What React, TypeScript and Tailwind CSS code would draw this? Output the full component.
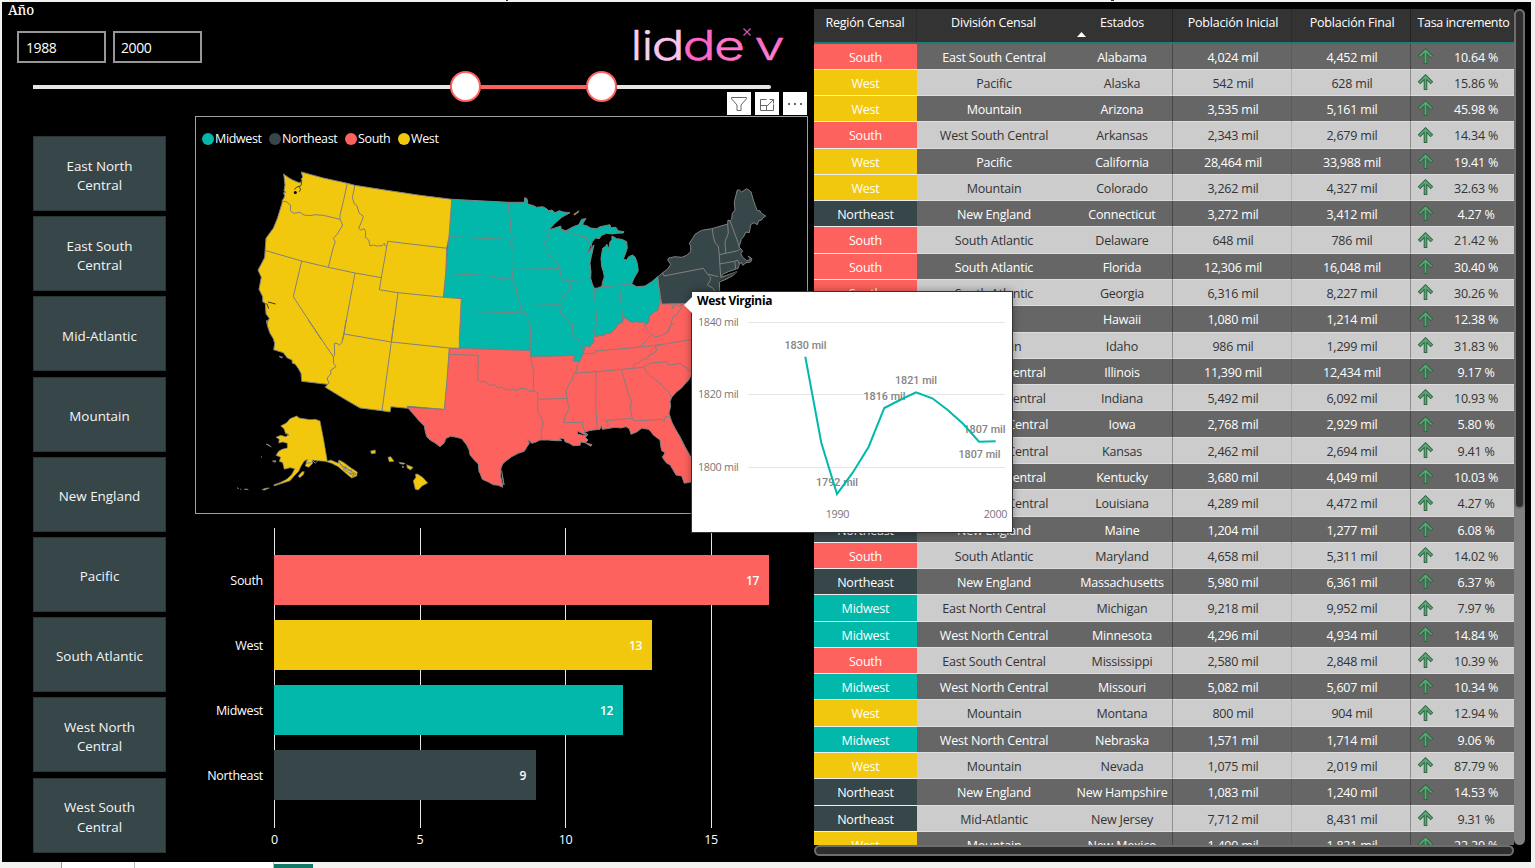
import React from "react";

type Region = "South" | "West" | "Midwest" | "Northeast";
type Row = [Region, string, string, string, string, string];

const REGION_BG: Record<Region, string> = {
  South: "bg-[#fd625e]",
  West: "bg-[#f2c80f]",
  Midwest: "bg-[#01b8aa]",
  Northeast: "bg-[#374649]",
};

const ROWS: Row[] = [
  ["South", "East South Central", "Alabama", "4,024", "4,452", "10.64"],
  ["West", "Pacific", "Alaska", "542", "628", "15.86"],
  ["West", "Mountain", "Arizona", "3,535", "5,161", "45.98"],
  ["South", "West South Central", "Arkansas", "2,343", "2,679", "14.34"],
  ["West", "Pacific", "California", "28,464", "33,988", "19.41"],
  ["West", "Mountain", "Colorado", "3,262", "4,327", "32.63"],
  ["Northeast", "New England", "Connecticut", "3,272", "3,412", "4.27"],
  ["South", "South Atlantic", "Delaware", "648", "786", "21.42"],
  ["South", "South Atlantic", "Florida", "12,306", "16,048", "30.40"],
  ["South", "South Atlantic", "Georgia", "6,316", "8,227", "30.26"],
  ["West", "Pacific", "Hawaii", "1,080", "1,214", "12.38"],
  ["West", "Mountain", "Idaho", "986", "1,299", "31.83"],
  ["Midwest", "East North Central", "Illinois", "11,390", "12,434", "9.17"],
  ["Midwest", "East North Central", "Indiana", "5,492", "6,092", "10.93"],
  ["Midwest", "West North Central", "Iowa", "2,768", "2,929", "5.80"],
  ["Midwest", "West North Central", "Kansas", "2,462", "2,694", "9.41"],
  ["South", "East South Central", "Kentucky", "3,680", "4,049", "10.03"],
  ["South", "West South Central", "Louisiana", "4,289", "4,472", "4.27"],
  ["Northeast", "New England", "Maine", "1,204", "1,277", "6.08"],
  ["South", "South Atlantic", "Maryland", "4,658", "5,311", "14.02"],
  ["Northeast", "New England", "Massachusetts", "5,980", "6,361", "6.37"],
  ["Midwest", "East North Central", "Michigan", "9,218", "9,952", "7.97"],
  ["Midwest", "West North Central", "Minnesota", "4,296", "4,934", "14.84"],
  ["South", "East South Central", "Mississippi", "2,580", "2,848", "10.39"],
  ["Midwest", "West North Central", "Missouri", "5,082", "5,607", "10.34"],
  ["West", "Mountain", "Montana", "800", "904", "12.94"],
  ["Midwest", "West North Central", "Nebraska", "1,571", "1,714", "9.06"],
  ["West", "Mountain", "Nevada", "1,075", "2,019", "87.79"],
  ["Northeast", "New England", "New Hampshire", "1,083", "1,240", "14.53"],
  ["Northeast", "Mid-Atlantic", "New Jersey", "7,712", "8,431", "9.31"],
  ["West", "Mountain", "New Mexico", "1,490", "1,821", "22.20"],
];

/* Rows average 26.27px; these take the extra pixel so that every rule stays crisp. */
const TALL_ROWS = new Set([3, 7, 10, 14, 17, 21, 25, 28]);

const DIVISIONS = [
  "East North Central",
  "East South Central",
  "Mid-Atlantic",
  "Mountain",
  "New England",
  "Pacific",
  "South Atlantic",
  "West North Central",
  "West South Central",
];

/* Map geometry: each sheet has its own origin and is digitised at three units per pixel. */
const sheet = (ox: number, oy: number) => (pts: string) =>
  pts
    .trim()
    .split(/\s+/)
    .map((p) => {
      const [x, y] = p.split(",").map(Number);
      return `${(ox + x / 3).toFixed(1)},${(oy + y / 3).toFixed(1)}`;
    })
    .join(" ");

const NW = sheet(240, 160);
const N = sheet(430, 180);
const NE = sheet(600, 170);
const SW = sheet(230, 320);
const S = sheet(430, 320);

const WEST = [
  NW("131,42 136,46 147,54 158,60 170,65 178,68 186,64 184,56 188,52 184,36 250,54 322,70 344,76 440,91 540,106 635,118 627,230 620,265 617,340 610,412 664,416 658,540"),
  SW("688,85 658,84 650,190 643,268 532,259 533,265 483,260 480,276 456,272 390,264 340,235 286,202 292,193 215,184 213,160 204,144 195,132 187,130 186,120 172,114 160,98 131,89 134,70 130,56 119,38 112,16 111,0"),
  NW("80,490 88,475 78,462 76,430 68,425 68,410 57,388 64,352 54,330 66,308 74,292 76,262 78,235 90,218 100,205 112,176 126,130 127,120 130,118 134,108 131,98 138,97 132,93 135,75"),
].join(" ");

const OHIO_RIVER =
  "690,355 688,375 682,392 672,396 665,402 658,410 656,425 650,432 640,425 630,428 620,424 606,428 598,422 585,413 578,415 578,427 566,430 560,440 550,452 540,460 528,460 518,468 508,464 500,470 490,466 492,486 482,494 480,500 465,498 460,520";

const MIDWEST = [
  N("65,58 235,67 283,67 284,53 291,56 294,73 308,76 320,82 338,80 350,86 356,92 366,90 375,98 388,92 400,96 420,98 395,112 375,130 357,149 375,144 392,138 394,148 408,152 430,140 446,134 455,118 468,116 460,128 458,134 472,138 482,144 500,146 510,140 540,134 542,143 558,142 564,152 582,155 580,159 562,160 545,162 530,160 515,166 508,176 496,174 488,184 480,200 472,222 482,208 492,195 484,230 480,250 483,275 482,295 487,312 493,325 505,324 515,320 518,305 523,290 520,275 515,260 513,235 518,205 528,198 530,192 536,206 540,185 546,180 546,168 560,176 575,178 590,185 592,205 586,222 580,238 590,240 596,230 608,225 616,232 622,250 625,272 612,295 605,312 620,320 645,318 665,305 683,290"),
  N(OHIO_RIVER),
  S("448,125 428,122 436,106 303,110 301,91 87,85"),
  N("94,358 40,352 47,280 56,170"),
].join(" ");

const SOUTH = [
  S("58,84 301,91 303,110 436,106 428,122 448,125 460,100"),
  N(OHIO_RIVER.split(" ").reverse().join(" ")),
  NE("185,402 240,394 290,386 380,370 400,420 430,470 370,520"),
  S("783,165 778,178 765,192 754,205 740,215 732,224 725,232 720,245 722,258 717,280 725,305 735,325 750,350 765,380 783,412 800,440 803,475 783,486 763,490 755,468 738,465 728,448 720,434 710,430 697,412 705,398 695,392 692,378 690,360 670,345 662,334 655,328 635,325 620,336 603,343 598,326 588,320 572,324 555,322 530,326 517,328 514,316 510,328 490,330 478,332 463,337 474,344 460,342 443,334 442,342 458,346 472,346 466,352 474,360 466,368 486,374 482,379 465,368 452,366 450,376 430,377 418,370 405,365 402,356 388,354 395,362 375,362 355,360 330,360 318,366 305,370 293,358 298,370 290,382 283,394 265,400 245,410 240,414 225,425 218,432 213,445 212,470 216,485 218,502 205,496 190,494 175,486 157,478 150,460 147,455 145,432 133,420 120,405 118,392 110,375 95,356 80,352 62,349 48,355 42,370 30,380"),
  SW("614,368 600,360 590,350 586,335 583,318 565,300 555,288 532,262 643,268"),
].join(" ");

const NORTHEAST = NE(
  "172,322 188,308 203,297 212,283 203,270 206,264 225,260 245,262 260,256 272,245 272,228 268,220 278,205 285,193 305,181 335,176 383,162 384,150 390,152 395,148 397,130 405,120 403,95 412,60 418,60 425,66 440,56 453,65 460,90 467,110 472,122 480,122 484,130 497,138 488,144 485,150 476,152 472,164 462,158 452,164 450,176 448,188 438,186 432,198 424,208 420,222 416,230 424,238 428,245 422,250 428,262 440,272 452,268 444,258 456,266 452,276 438,278 428,286 424,276 418,284 414,295 385,305 370,312 362,322 380,316 410,305 400,316 378,328 358,336 360,382 345,400 185,402"
);

const ALASKA = SW(
  "200,288 208,294 222,296 240,299 256,298 270,303 281,360 292,424 302,420 325,430 327,420 342,428 360,442 382,456 380,468 365,474 350,462 325,440 305,430 285,424 262,422 246,420 248,430 236,442 226,438 232,418 222,424 212,440 206,454 192,468 180,482 150,492 132,498 132,494 150,488 170,478 185,464 194,446 180,443 163,448 158,428 148,424 152,412 138,406 146,394 156,388 172,384 172,370 158,366 146,369 148,358 138,352 152,346 168,350 176,344 166,338 162,326 152,318 170,308 180,296"
);

const HAWAII = [
  "422,393 436,390 436,400 424,401",
  "474,412 482,410 492,424 478,425",
  "507,427 525,430 522,433 510,431",
  "530,434 549,442 542,450 532,444",
  "516,438 521,440 519,444",
  "556,463 562,462 575,470 580,474 593,489 576,498 565,510 556,508 550,482 558,472",
].map(SW);

const ISLES = [
  SW("108,372 116,374 124,381 118,378"),
  SW("205,468 216,455 223,455 220,464 209,473"),
  SW("127,423 138,422 136,427"),
  SW("93,410 96,411"),
  SW("21,503 26,506"),
  SW("31,507 34,509"),
  SW("43,508 55,509 50,507"),
  SW("96,509 106,505 118,504 104,510"),
  SW("147,109 158,111 154,114"),
  N("431,103 447,92 445,97 434,105"),
];

const BORDERS = [
  NW("126,124 140,125 144,130 152,136 151,152 162,160 180,157 192,165 210,167 225,164 250,166 300,178"),
  NW("322,70 310,125 300,165 300,178 308,195 292,222 280,235 286,245 280,262 265,322"),
  NW("78,272 185,303 265,322 345,339 425,353"),
  NW("344,76 341,96 337,112 343,132 350,136 358,160 370,168 366,182 356,205 362,210 373,206 377,215 376,232 386,240 390,258 400,255 410,258 426,257 433,250 436,258 440,260"),
  NW("622,265 443,244 418,389 474,398 612,412"),
  NW("185,303 160,410 245,540"),
  SW("235,0 310,110"),
  NW("345,339 308,540"),
  SW("348,0 342,42 335,68 328,76 322,70 313,70 314,105 310,110 311,130 318,140 303,150 302,162 293,172 292,180 298,186 288,200"),
  NW("474,398 455,540"),
  SW("492,0 484,66 456,272"),
  SW("342,42 484,66 658,84"),
  N("235,67 236,95 241,115 241,145 247,178 241,190 250,204 250,268 246,285 250,304 258,320 261,342 266,350 270,377 274,392 285,400 294,406 292,418 302,432 301,511"),
  N("56,170 247,179"),
  N("47,280 190,288 208,296 232,293 248,303"),
  N("250,268 390,266"),
  N("94,394 285,399"),
  N("270,377 385,374 388,380"),
  N("357,149 357,172 343,186 348,200 346,218 366,232 382,248 390,266 391,288 405,301 420,312 421,325 412,340 398,346 402,365 388,378 392,398 412,416 415,430 428,434 425,462 446,478 451,500 460,515"),
  N("405,301 483,298"),
  N("394,150 410,158 440,164 468,172 478,190 486,195 480,212"),
  N("493,325 498,400 502,430 493,450 492,468"),
  N("505,322 570,316 605,312"),
  N("568,318 578,415"),
  S("58,103 145,106 143,180 154,186 165,184 180,196 195,195 203,204 214,200 222,208 232,206 238,211 248,206 254,213 268,206 285,205 300,214 310,212 323,218 323,275 332,290 340,312 333,335 335,358"),
  S("303,110 306,135 311,155 310,214"),
  S("323,238 412,235"),
  S("448,125 440,138 441,150 430,165 426,182 417,192 408,212 411,235 414,250 418,265 405,290 400,308 457,307 458,320 465,335"),
  S("455,102 495,99 495,93 625,82 700,73 790,57"),
  S("436,159 500,155 640,142 660,130 710,125 717,136 750,130 790,158"),
  S("498,156 497,260 502,328"),
  S("575,150 590,205 604,245 601,265 607,295"),
  S("532,322 535,312 527,302 607,295 613,303 697,298 702,305 706,290 718,290"),
  S("643,142 648,155 672,176 690,190 705,206 718,218 725,235"),
  S("610,142 614,130 625,130 640,116 650,118 658,104 672,100 680,90 675,80 690,74"),
  S("625,82 642,70 650,58 665,43 650,30 643,10"),
  N("665,463 676,471 695,466 712,458 720,438 732,430"),
  NE("205,485 212,466 218,440 228,436 240,420 248,402 236,410 226,402 218,416 215,400"),
  S("215,452 222,495 217,468"),
  S("750,352 760,375"),
  NE("188,308 192,318 310,295 322,312 355,320"),
  NE("325,315 332,322 330,332 322,345 340,355 345,365"),
  NE("337,176 340,200 346,220 355,228 358,255 360,290 362,320"),
  NE("383,162 385,190 375,215 377,250"),
  NE("390,152 415,220 418,230"),
  NE("358,254 377,250 410,243 422,236"),
  NE("358,282 404,274 413,270 418,282"),
  NE("404,274 407,297"),
  SW("325,422 335,440 350,448 345,438 356,452 365,450 360,462 372,460 368,470"),
  SW("330,430 346,444 340,448 356,458 370,468 378,462 352,446"),
  SW("165,340 176,344 168,350"),
  SW("246,420 256,430 262,424"),
  SW("232,420 228,430 244,428"),
];

const INLETS = [
  NW("184,62 184,74 178,82 182,88 178,95"),
  NW("178,78 170,82 163,88"),
  NW("107,432 84,426"),
  NW("80,430 86,446"),
  NE("358,334 385,318 408,307"),
];

const UsMap = () => (
  <svg className="block h-full w-full" viewBox="196 117 611 396">
    <g stroke="#808080" strokeWidth="1" strokeLinejoin="round">
      <polygon points={SOUTH} fill="#fd625e" />
      <polygon points={NORTHEAST} fill="#374649" />
      <polygon points={MIDWEST} fill="#01b8aa" />
      <polygon points={WEST} fill="#f2c80f" />
      <g fill="#f2c80f" strokeWidth="0.7">
        <polygon points={ALASKA} />
        {HAWAII.map((p) => (
          <polygon key={p} points={p} />
        ))}
        {ISLES.map((p) => (
          <polygon key={p} points={p} />
        ))}
      </g>
      {BORDERS.map((p) => (
        <polyline key={p} points={p} fill="none" />
      ))}
      {INLETS.map((p) => (
        <polyline key={p} points={p} fill="none" stroke="#2b2b2b" strokeWidth="0.9" />
      ))}
      <circle cx="295.3" cy="192.5" r="1.5" fill="#000" stroke="none" />
    </g>
  </svg>
);

const Logo = () => (
  <svg
    className="block h-[64px] w-[170px]"
    viewBox="624 13 170 64"
    fontFamily="Inter, sans-serif"
    fontWeight="300"
    strokeWidth="0.5"
  >
    <defs>
      <linearGradient id="fade" x1="0" y1="0" x2="0" y2="1">
        <stop offset="0.3" stopColor="#ff5fc4" />
        <stop offset="1" stopColor="#f79bdc" />
      </linearGradient>
    </defs>
    <g fontSize="40.5">
      <text transform="translate(631 60) scale(1.15 1)" fill="#f9d3f0" stroke="#f9d3f0">l</text>
      <text transform="translate(642 60) scale(1.15 1)" fill="#f9d3f0" stroke="#f9d3f0">i</text>
      <text transform="translate(651.5 60) scale(1.37 1)" fill="#fbc4ea" stroke="#fbc4ea">d</text>
      <text transform="translate(682.5 60) scale(1.37 1)" fill="#ff66c8" stroke="#ff66c8">d</text>
      <text transform="translate(714 60) scale(1.32 1)" fill="#ff76cc" stroke="#ff76cc">e</text>
      <text transform="translate(754.5 60) scale(1.34 1)" fill="url(#fade)" stroke="#ff76cc">v</text>
    </g>
    <path d="M743.5 28.5l7 7M750.5 28.5l-7 7" stroke="#d557a8" strokeWidth="1.2" fill="none" />
  </svg>
);

const Thumb = () => (
  <div className="h-[31px] w-[31px] shrink-0 rounded-full border-[2.5px] border-[#fd625e] bg-white" />
);

const YearSlicer = () => (
  <section className="h-[114px] w-[806px]">
    <div className="flex h-[78px] justify-between">
      <div>
        <h2 className="h-[29px] pl-[6px] font-['Noto_Serif','Liberation_Serif',serif] text-[13.5px] font-medium leading-[17px] tracking-[-0.1px] text-white">Año</h2>
        <div className="flex gap-[7px] pl-[15px] text-[14px] tracking-[-0.4px]">
          <div className="flex h-8 w-[89px] items-center border-2 border-[#979797] pl-[7px]">1988</div>
          <div className="flex h-8 w-[89px] items-center border-2 border-[#979797] pl-[6px]">2000</div>
        </div>
      </div>
      <div className="pr-[14px] pt-[11px]">
        <Logo />
      </div>
    </div>
    <div className="relative ml-[31px] mt-[-9px] flex h-[31px] w-[738px] items-center">
      <div className="h-1 w-[417px] bg-[#e6e6e6]" />
      <Thumb />
      <div className="h-1 w-[105px] bg-[#fd625e]" />
      <Thumb />
      <div className="h-1 flex-1 rounded-r-full bg-[#e6e6e6]" />
    </div>
  </section>
);

const MapTools = () => (
  <div className="absolute right-0 top-[-25px] flex gap-1">
    <div className="flex h-[23px] w-6 items-center justify-center bg-white">
      <svg className="h-[18px] w-[18px]" viewBox="0 0 18 18" fill="none" stroke="#666" strokeWidth="1">
        <path d="M1.5 2.5h15v1.2L11 10v5.5H7V10L1.5 3.7z" />
      </svg>
    </div>
    <div className="flex h-[23px] w-6 items-center justify-center bg-white">
      <svg className="h-[18px] w-[18px]" viewBox="0 0 18 18" fill="none" stroke="#666" strokeWidth="1">
        <path d="M8.5 4.5h-6v11h13v-6M2.5 10.5h6v5M8.5 11.5l7-7M11.5 4.5h4v4" />
      </svg>
    </div>
    <div className="flex h-[23px] w-6 items-center justify-center gap-1 bg-white">
      <i className="h-[2px] w-[2px] bg-[#666]" />
      <i className="h-[2px] w-[2px] bg-[#666]" />
      <i className="h-[2px] w-[2px] bg-[#666]" />
    </div>
  </div>
);

const LEGEND: [Region, string][] = [
  ["Midwest", "w-[67px]"],
  ["Northeast", "w-[76px]"],
  ["South", "w-[53px]"],
  ["West", "w-[50px]"],
];

const Legend = () => (
  <div className="absolute left-[5.5px] top-[13px] flex text-[12.5px] leading-[18px] tracking-[-0.35px] text-white">
    {LEGEND.map(([name, w]) => (
      <div key={name} className={`flex items-center gap-[1.5px] whitespace-nowrap ${w}`}>
        <i className={`h-3 w-3 shrink-0 rounded-full ${REGION_BG[name]}`} />
        {name}
      </div>
    ))}
  </div>
);

const BARS: [Region, number, string][] = [
  ["South", 17, "w-[495px]"],
  ["West", 13, "w-[378px]"],
  ["Midwest", 12, "w-[349px]"],
  ["Northeast", 9, "w-[262px]"],
];

const BarChart = () => (
  <section className="relative mt-[14px] h-[334px] w-[613px] text-[12.5px] tracking-[-0.3px]">
    <div className="absolute left-[79px] top-0 flex h-[300px] gap-[144.5px]">
      {[0, 5, 10, 15].map((n) => (
        <div key={n} className="relative w-px bg-[#e8e8e8]">
          <span className="absolute left-1/2 top-[303px] -translate-x-1/2 leading-[18px]">{n}</span>
        </div>
      ))}
    </div>
    <div className="relative flex flex-col gap-[15.2px] pt-[26.5px]">
      {BARS.map(([name, value, w]) => (
        <div key={name} className="flex h-[50px] items-center">
          <span className="w-[68px] pt-[3px] text-right">{name}</span>
          <div
            className={`ml-[11px] flex h-full items-center justify-end pr-[10px] pt-[2px] text-[12px] font-semibold ${w} ${REGION_BG[name]}`}
          >
            {value}
          </div>
        </div>
      ))}
    </div>
  </section>
);

const UpArrow = () => (
  <svg className="h-[17px] w-[17px] shrink-0" viewBox="0 0 17 17" fill="none">
    <path d="M8.5 16V3M2 9L8.5 2.5L15 9" stroke="#2f6344" strokeWidth="3.6" />
    <path d="M8.5 15V3M2.5 8.5L8.5 2.5L14.5 8.5" stroke="#5aa873" strokeWidth="1.7" />
  </svg>
);

const COLS = "grid grid-cols-[103px_153px_103px_119px_119px_103px]";

const DataTable = () => (
  <section className="mt-[7px] w-[711px] text-[12.5px] tracking-[-0.2px]">
    <div className="flex">
      <div className="h-[836px] w-[700px] overflow-hidden">
        <div className={`${COLS} h-[35px] border-b-2 border-[#1a7d76] bg-[#333] text-center leading-[27px]`}>
          <div className="border-r border-[#2b2b2b]">Región Censal</div>
          <div>División Censal</div>
          <div className="relative border-r border-[#222] pl-[2px]">
            Estados
            <svg className="absolute left-[7px] top-[23px] h-[5px] w-[9px]" viewBox="0 0 9 5">
              <path d="M0 5L4.5 0L9 5z" fill="#fff" />
            </svg>
          </div>
          <div className="border-r border-[#2b2b2b] pl-[2px]">Población Inicial</div>
          <div className="border-r border-[#222] pl-[2px]">Población Final</div>
          <div className="whitespace-nowrap pl-[2px] tracking-[-0.35px]">Tasa incremento</div>
        </div>
        {ROWS.map(([region, division, state, from, to, rate], i) => (
          <div
            key={state}
            className={`${COLS} text-center leading-[27px] ${TALL_ROWS.has(i) ? "h-[27px]" : "h-[26px]"} ${
              i % 2 ? "bg-[#ccc] text-[#333]" : "bg-[#666] font-medium text-white"
            }`}
          >
            <div className={`h-full overflow-hidden border-b border-[#eee] font-medium text-white ${REGION_BG[region]}`}>{region}</div>
            <div className="h-full overflow-hidden border-b border-b-[#ddd] pl-px">{division}</div>
            <div className="h-full overflow-hidden whitespace-nowrap border-b border-r border-b-[#ddd] border-r-black/30 pl-[2px]">{state}</div>
            <div className="h-full overflow-hidden border-b border-r border-b-[#ddd] border-r-black/10 pl-[2px]">{from} mil</div>
            <div className="h-full overflow-hidden border-b border-r border-b-[#ddd] border-r-black/30 pl-[2px]">{to} mil</div>
            <div className="flex h-full items-center overflow-hidden border-b border-b-[#ddd] pl-[6px]">
              <UpArrow />
              <span className="flex-1 pl-[4px] pt-px">{rate} %</span>
            </div>
          </div>
        ))}
      </div>
      <div className="h-[836px] w-[11px] rounded-full bg-[#808080]">
        <div className="h-[500px] rounded-full border-2 border-[#6e6e6e] bg-[#2f2e2d]" />
      </div>
    </div>
    <div className="h-[11px] w-[700px] rounded-full border-2 border-[#6e6e6e] bg-[#2f2e2d]" />
  </section>
);

const Tooltip = () => (
  <div className="absolute left-[691px] top-[291px] h-[242px] w-[322px] border border-[#333] bg-white shadow-[0_0_8px_rgba(0,0,0,0.35)]">
    <svg className="absolute left-[-8px] top-[5px] h-4 w-2" viewBox="0 0 8 16">
      <path d="M8 0L0 8L8 16z" fill="#fff" />
    </svg>
    <h3 className="absolute left-[5px] top-0 text-[12px] font-bold leading-[18px] tracking-[-0.3px] text-black">West Virginia</h3>
    <svg className="block h-[240px] w-[320px]" viewBox="692 292 320 240" fontSize="10.8" fill="#777" letterSpacing="-0.3">
      <path d="M748 322.5H1005M748 394.5H1005M748 467.5H1005" stroke="#e6e6e6" />
      <text x="698" y="326">1840 mil</text>
      <text x="698" y="398">1820 mil</text>
      <text x="698" y="471">1800 mil</text>
      <g textAnchor="middle">
        <text x="837.5" y="518">1990</text>
        <text x="995.5" y="518">2000</text>
        <g fontWeight="500" fontFamily="Roboto, sans-serif" letterSpacing="0" fill="#848484">
          <text x="805.5" y="349">1830 mil</text>
          <text x="884.5" y="400">1816 mil</text>
          <text x="916" y="384">1821 mil</text>
          <text x="984.5" y="433">1807 mil</text>
          <text x="979.5" y="458">1807 mil</text>
          <text x="837" y="486">1792 mil</text>
        </g>
      </g>
      <polyline
        points="805.3,356.7 821.3,442.7 837,494 852.7,472.7 868.7,446.7 884.3,408 900,400 916,392.3 932.3,398.3 947.7,410 963.3,424 979,441.7 995.7,441.3"
        fill="none"
        stroke="#01b8aa"
        strokeWidth="2"
      />
    </svg>
  </div>
);

export default function App() {
  return (
    <div className="relative h-[868px] w-[1535px] overflow-hidden bg-[#f3f2f1] font-['Open_Sans','Segoe_UI',sans-serif] text-white">
      <div className="flex h-[2px] gap-[603px] pl-[506px]">
        <i className="h-px w-[2px] bg-[#333]" />
        <i className="h-px w-[3px] bg-[#333]" />
      </div>
      <div className="ml-[2px] flex h-[860px] w-[1529px] bg-black">
        <div className="w-[812px]">
          <YearSlicer />
          <div className="flex pl-[31px]">
            <nav className="flex w-[133px] flex-col gap-[5.2px] pt-[20px]">
              {DIVISIONS.map((d) => (
                <button
                  key={d}
                  className="flex h-[75px] items-center justify-center border border-[#2a3537] bg-[#374649] px-4 pt-[5px] text-center text-[13.4px] leading-[19.3px] text-[#f5f5f5]"
                >
                  {d}
                </button>
              ))}
            </nav>
            <div className="ml-[29px]">
              <section className="relative h-[398px] w-[613px] border border-[#a0a0a0]">
                <UsMap />
                <Legend />
                <MapTools />
              </section>
              <BarChart />
            </div>
          </div>
        </div>
        <DataTable />
      </div>
      <div className="ml-[2px] flex h-[6px]">
        <div className="w-[60px] border-r border-[#999]" />
        <div className="w-[73px] border-r border-[#bbb] bg-white" />
        <div className="w-[139px] border-r border-[#bbb] bg-white" />
        <div className="mt-[2px] w-[39px] bg-[#117865]" />
      </div>
      <Tooltip />
    </div>
  );
}
